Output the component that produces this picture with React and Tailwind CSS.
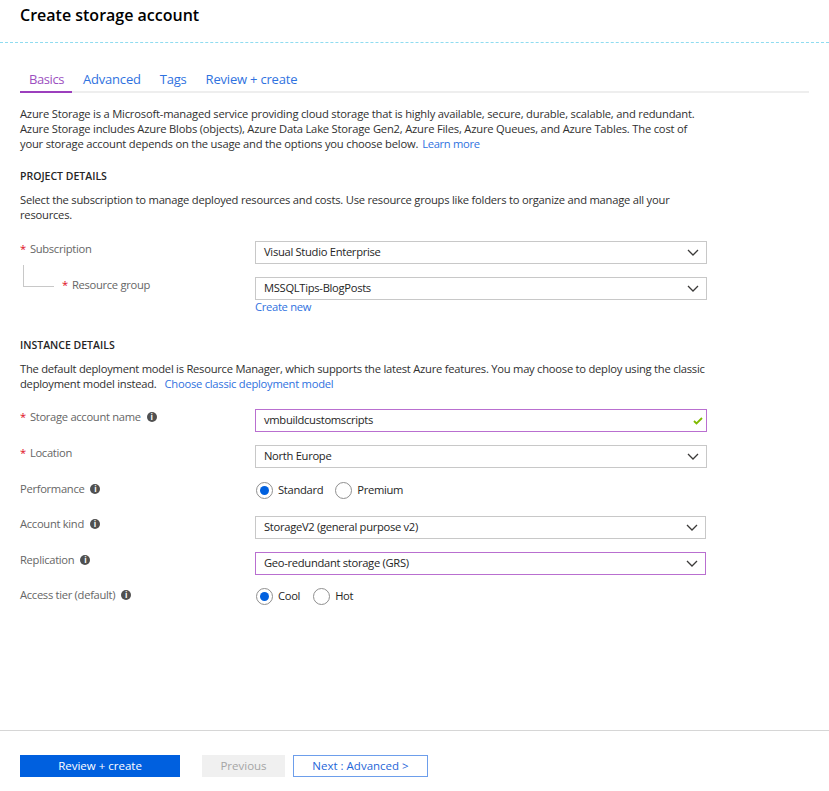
import React from "react";

const Chevron = () => (
  <svg width="12" height="7" viewBox="0 0 12 7" fill="none" stroke="#3b3a39" strokeWidth="1.3" className="shrink-0">
    <path d="M1 1l5 5 5-5" />
  </svg>
);

const Info = () => (
  <span className="ml-[6px] inline-flex h-[10px] w-[10px] items-center justify-center rounded-full bg-[#505050] text-[8px] font-bold leading-none tracking-normal text-white">
    i
  </span>
);

const Star = () => <span className="mr-[4px] text-[#e00b1c]">*</span>;

const Label = ({ required, info, children }) => (
  <div className="flex items-center text-[11.2px] tracking-[-0.3px] text-[#666666]">
    {required && <Star />}
    <span>{children}</span>
    {info && <Info />}
  </div>
);

const Select = ({ value, active, width = "w-[452px]", check }) => (
  <div
    className={`flex h-[23px] ${width} items-center justify-between border pl-[8px] pr-[7px] text-[11.2px] tracking-[-0.3px] text-[#252525] ${
      active ? "border-[#b96fd0]" : "border-[#c8c8c8]"
    }`}
  >
    <span>{value}</span>
    {check ? (
      <svg width="10" height="8" viewBox="0 0 10 8" fill="none" stroke="#7fba00" strokeWidth="1.8" className="mr-[-4px]">
        <path d="M1 4l2.5 2.5 5.5-5.5" />
      </svg>
    ) : (
      <Chevron />
    )}
  </div>
);

const Radio = ({ label, checked }) => (
  <div className="flex items-center gap-[5px] text-[11.2px] tracking-[-0.3px] text-[#252525]">
    <span className="flex h-[17px] w-[17px] items-center justify-center rounded-full border border-[#8f8f8f]">
      {checked && <span className="h-[9px] w-[9px] rounded-full bg-[#0060df]"></span>}
    </span>
    <span>{label}</span>
  </div>
);

const Row = ({ className, label, height = "h-[23px]", lift = "pb-[6px]", children }) => (
  <div className={`flex ${height} items-center pl-[20px] ${className}`}>
    <div className={`w-[235px] ${lift}`}>{label}</div>
    {children}
  </div>
);

const App = () => {
  return (
    <div className="h-[791px] w-[829px] overflow-hidden bg-white font-['Open_Sans','Noto_Sans',sans-serif]">
      <div className="h-[43px] border-b border-dashed border-[#8fdcf0] pl-[20px] pt-[3px]">
        <h1 className="text-[16px] font-semibold leading-[24px] text-black">Create storage account</h1>
      </div>

      <div className="mx-[20px] mt-[25px] flex h-[25px] gap-[19px] border-b-2 border-[#eeeeee] pt-[2px] text-[13px] tracking-[-0.2px]">
        <div className="mr-[-8px] h-[23px] w-[52px] whitespace-nowrap border-b-2 border-[#9c3fbd] pl-[9px] tracking-[-0.4px] text-[#9c4fc0]">Basics</div>
        <div className="text-[#2f72e0]">Advanced</div>
        <div className="text-[#2f72e0]">Tags</div>
        <div className="text-[#2f72e0]">Review + create</div>
      </div>

      <p className="mt-[13px] pl-[20px] text-[11.2px] leading-[15px] tracking-[-0.2px] text-[#303030]">
        Azure Storage is a Microsoft-managed service providing cloud storage that is highly available, secure, durable, scalable, and redundant.
        <br />
        Azure Storage includes Azure Blobs (objects), Azure Data Lake Storage Gen2, Azure Files, Azure Queues, and Azure Tables. The cost of
        <br />
        your storage account depends on the usage and the options you choose below.
        <span className="ml-[4px] tracking-[-0.3px] text-[#2f72e0]">Learn more</span>
      </p>

      <h2 className="mt-[18px] pl-[20px] text-[10.5px] font-semibold leading-[15px] text-[#252525]">PROJECT DETAILS</h2>
      <p className="mt-[8px] pl-[20px] text-[11.2px] leading-[15px] tracking-[-0.23px] text-[#303030]">
        Select the subscription to manage deployed resources and costs. Use resource groups like folders to organize and manage all your
        <br />
        resources.
      </p>

      <Row className="mt-[19px]" label={<Label required>Subscription</Label>}>
        <Select value="Visual Studio Enterprise" />
      </Row>
      <div className="relative">
        <div className="absolute left-[23px] top-[-12px] h-[22px] w-[31px] border-b border-l border-[#c8c8c8]"></div>
        <Row className="mt-[13px]" label={<div className="pl-[42px]"><Label required>Resource group</Label></div>}>
          <Select value="MSSQLTips-BlogPosts" />
        </Row>
      </div>
      <div className="mt-[-1px] pl-[255px] text-[11.2px] leading-[16px] tracking-[-0.3px] text-[#2f72e0]">Create new</div>

      <h2 className="mt-[23px] pl-[20px] text-[10.5px] font-semibold leading-[15px] text-[#252525]">INSTANCE DETAILS</h2>
      <p className="mt-[8px] pl-[20px] text-[11.2px] leading-[15px] tracking-[-0.25px] text-[#303030]">
        The default deployment model is Resource Manager, which supports the latest Azure features. You may choose to deploy using the classic
        <br />
        deployment model instead.
        <span className="ml-[8px] text-[#2f72e0]">Choose classic deployment model</span>
      </p>

      <Row className="mt-[18px]" label={<Label required info>Storage account name</Label>}>
        <Select value="vmbuildcustomscripts" active check />
      </Row>
      <Row className="mt-[13px]" label={<Label required>Location</Label>}>
        <Select value="North Europe" />
      </Row>
      <Row className="mt-[12px]" height="h-[20px]" lift="pb-[2px]" label={<Label info>Performance</Label>}>
        <div className="ml-[1px] flex gap-[12px]">
          <Radio label="Standard" checked />
          <Radio label="Premium" />
        </div>
      </Row>
      <Row className="mt-[16px]" label={<Label info>Account kind</Label>}>
        <Select value="StorageV2 (general purpose v2)" width="w-[451px]" />
      </Row>
      <Row className="mt-[13px]" label={<Label info>Replication</Label>}>
        <Select value="Geo-redundant storage (GRS)" active width="w-[451px]" />
      </Row>
      <Row className="mt-[11px]" height="h-[20px]" lift="pb-[2px]" label={<Label info>Access tier (default)</Label>}>
        <div className="ml-[1px] flex gap-[13px]">
          <Radio label="Cool" checked />
          <Radio label="Hot" />
        </div>
      </Row>

      <div className="mt-[124px] flex items-start gap-[22px] border-t border-[#d6d6d6] pl-[20px] pt-[24px]">
        <button className="h-[22px] w-[160px] bg-[#0060df] text-[11.5px] font-medium text-white">Review + create</button>
        <div className="flex gap-[8px]">
          <button className="h-[22px] w-[83px] bg-[#f0f0f0] text-[11.5px] font-medium text-[#a5a5a5]">Previous</button>
          <button className="h-[22px] w-[135px] border border-[#6d9eeb] text-[11.5px] font-medium text-[#1f66d8]">Next : Advanced &gt;</button>
        </div>
      </div>
    </div>
  );
};

export default App;
